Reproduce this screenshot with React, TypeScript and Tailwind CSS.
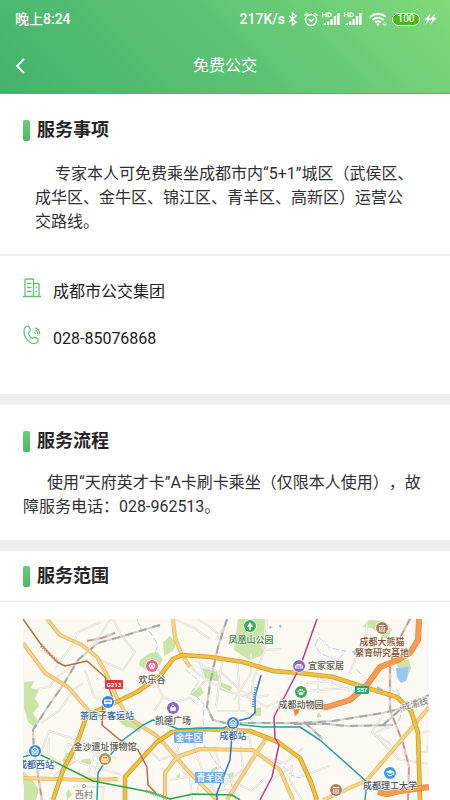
import type { ReactNode } from "react";

const signals = ["sim1", "sim2"];

const parks = [
  "M238 619H265L263 655L249 660L234 650Z",
  "M24 682L34 681L31 688L39 690L35 698L39 706L33 713L38 721L35 728L28 722L24 708Z",
  "M140 660L150 653L158 652L163 660L155 672L146 670L139 665Z",
  "M163 642L170 636L176 643L173 651L164 656Z",
  "M203 668L217 672L221 682L211 680L203 677Z",
  "M221 682L232 687L229 693L220 690Z",
  "M192 690L201 687L204 693L198 697L190 695Z",
  "M362 627L369 620L384 621L392 630L386 639L377 632L372 628Z",
  "M395 662L409 659L411 668L406 681L398 679L399 669Z",
  "M118 715L142 727L139 733L132 728L126 727L120 722Z",
  "M255 709L261 707L261 716L255 716Z",
  "M317 715L319 712L322 717L317 718Z",
  "M66 753L74 752L76 762L68 767L62 761Z",
  "M81 760L90 758L92 764L83 764Z",
  "M211 770L217 766L218 773L212 774Z",
  "M228 774L234 772L233 778L229 777Z",
  "M176 776L180 773L180 778L178 779Z",
  "M23 771L33 781L39 790L36 800H24V785L23 784Z",
  "M69 789L72 795L67 800L66 793Z",
];

const lakes = [
  "M396 668L409 667L406 681L401 683L397 677Z",
  "M377 686L383 689L382 692L377 690Z",
  "M280 624L282 627L280 628L279 626Z",
  "M269 626L273 627L270 629Z",
  "M352 651L357 650L358 656L354 655Z",
];

const streams = [
  "M137 619L141 629L150 632L158 645L154 655L160 660",
  "M185 669L199 681L192 692L204 704L203 722L206 735",
  "M204 745L217 764L229 776L236 800",
  "M267 758L281 764L291 775L300 778",
  "M315 645L319 637L330 648L346 651L337 661L320 653Z",
  "M356 669L362 675L367 680L377 694",
  "M397 689L403 704L400 718L396 725",
];

const streets = [
  "M93 646L112 617L121 635L135 652L123 670L100 660",
  "M56 668L74 642L78 632L101 622",
  "M85 670L94 697L113 705",
  "M37 689L49 687L58 676L75 665",
  "M41 723L60 710L73 690L83 683",
  "M49 738L48 756L61 763M40 755L49 731L78 740L73 761L54 776",
  "M100 738L87 777M79 740L101 750L95 775M66 758L122 775",
  "M67 744L116 758M61 767L97 779M73 787H104L102 800",
  "M182 655L195 671L206 680L230 692L251 698L269 695",
  "M195 660L207 668L222 673L239 689L266 707L288 697",
  "M251 653L251 673L234 700M237 660L239 682L239 712",
  "M267 619L265 650L253 680L251 705M259 642L264 650L282 649",
  "M217 711H246L253 722M218 651L222 662L220 677L216 707",
  "M175 619L194 628L210 639M197 619L210 627L220 636",
  "M216 640L229 619M200 661L205 681L192 693",
  "M151 672L163 697L174 702L190 698L198 704M163 697L154 711",
  "M151 752L160 760L176 754L180 742L204 734",
  "M181 758L184 773L199 778L220 792M194 743L202 770L197 794",
  "M214 746L220 766L210 778L216 796M241 746L243 769L223 786",
  "M170 780L196 775L211 782L229 779L252 791L264 779",
  "M190 777L192 800M204 788L236 791M249 735L252 754",
  "M260 756L285 763L303 748M269 782L292 766L290 781L302 800",
  "M300 674L318 677L336 684L350 691M306 683L332 681L331 674",
  "M349 674L357 656L366 637L367 623M318 678V693M305 691L352 688",
  "M382 717L372 732L398 759L428 764M378 735L390 744L397 758",
  "M416 734L429 731M421 752L427 752V745M376 732L392 726",
  "M299 777L330 766M316 781L314 800",
];

const yellowRoads = [
  "M47 619L60 635L82 645L97 657L107 675L117 698L128 717L143 727L157 736L167 747L190 773L217 800",
  "M23 643L45 673L68 687L90 712L106 718",
  "M173 619L175 638L182 655L190 667",
  "M165 800V773L177 757L200 749L253 750L280 770L293 800",
  "M227 800L250 763L267 737",
  "M323 800L367 780L410 730L429 707",
  "M23 778L53 779L90 780L118 779",
];

const mainRoads = [
  "M53 800L63 770L77 743L87 715L110 705L137 692L160 676L173 659L182 655L210 657L243 662L273 671L300 673L333 677L367 688L397 697L411 711L418 733L420 800",
  "M125 800V777L143 757L157 742L172 732L200 729L250 731L278 742L300 758L310 780L317 800",
];

const expressways = [
  "M419 619L418 640L410 653L398 660L380 667L367 685L350 700L327 707L307 706",
  "M378 792L387 794L400 791L429 787",
];

const railways = [
  "M160 625L120 637L98 643L78 660L63 685L47 708L33 730L34 750",
  "M227 619L218 647L210 683L207 707L213 720L225 723H300L333 721L383 713L399 709L429 695",
  "M294 724H327L347 726L393 725M304 722L323 739M383 725L403 707",
];

const oldRailways = [
  "M410 619L395 647L390 667V710L403 743L409 767L408 800",
  "M34 750L38 775L42 800",
  "M87 641L102 638L115 633",
];

const metroLines = [
  {
    color: "#b66c41",
    path: "M23 619L40 643L57 662L65 666L87 661L105 677L113 699L103 704L102 725L120 740L138 750L147 767L148 785L156 793",
  },
  {
    color: "#279caa",
    path: "M97 800L98 773L107 759L123 740L143 725L153 720L163 723L178 729L223 728L234 724L263 727H300L320 740L367 782L365 800",
  },
  {
    color: "#2fa542",
    path: "M23 757L37 753L93 781L150 792L170 799L193 794L232 795L240 800",
  },
  {
    color: "#3674bd",
    path: "M261 675L255 697V713L249 718L233 722L230 760L217 793V800",
  },
  {
    color: "#c93a79",
    path: "M317 619L300 667L274 717L275 738L279 745L272 777L260 800",
  },
];

const markers = [
  { x: 152, y: 666, color: "#ed608c", kind: "wheel" },
  { x: 108, y: 702, color: "#3583df", kind: "bus" },
  { x: 35, y: 751, color: "#3583df", kind: "train" },
  { x: 105, y: 759, color: "#c5913c", kind: "museum" },
  { x: 173, y: 708, color: "#8c68cc", kind: "bag" },
  { x: 233, y: 723, color: "#3583df", kind: "train" },
  { x: 250, y: 626, color: "#40a85a", kind: "tree" },
  { x: 299, y: 666, color: "#8c68cc", kind: "sofa" },
  { x: 301, y: 692, color: "#40a85a", kind: "paw" },
  { x: 382, y: 628, color: "#ad7e5c", kind: "hall" },
  { x: 390, y: 773, color: "#3f9ce6", kind: "school" },
  { x: 336, y: 790, color: "#ad7e5c", kind: "hall" },
];

const places = [
  { name: "欢乐谷", x: 152, y: 683, color: "#5b5752" },
  { name: "茶店子客运站", x: 107, y: 719, color: "#2c65a4" },
  { name: "金沙遗址博物馆", x: 105, y: 750, color: "#5b5752" },
  { name: "成都西站", x: 36, y: 768, color: "#2c65a4" },
  { name: "西村", x: 84, y: 798, color: "#8c8882" },
  { name: "凯德广场", x: 173, y: 724, color: "#5b5752" },
  { name: "成都站", x: 233, y: 739, color: "#2c65a4" },
  { name: "凤凰山公园", x: 251, y: 643, color: "#35804a" },
  { name: "宜家家居", x: 326, y: 669, color: "#5b5752" },
  { name: "成都动物园", x: 301, y: 708, color: "#5b5752" },
  { name: "成都大熊猫", x: 382, y: 645, color: "#855232" },
  { name: "繁育研究基地", x: 382, y: 656, color: "#855232" },
  { name: "成都理工大学", x: 390, y: 789, color: "#4c5968" },
];

const districts = [
  { name: "金牛区", x: 189, y: 737 },
  { name: "青羊区", x: 210, y: 777 },
];

function MarkerGlyph({ kind }: { kind: string }) {
  switch (kind) {
    case "bus":
      return (
        <>
          <rect x="-4" y="-2.5" width="8" height="4.5" rx="1" fill="white" />
          <path d="M-3-.5H3M-1-2V0M1-2V0" stroke="#3583df" strokeWidth=".7" />
          <path d="M-2.5 3h1M1.5 3h1" stroke="white" />
        </>
      );
    case "train":
      return (
        <>
          <path d="M-3 2V-1.5L0-4 3-1.5V2Z" fill="none" stroke="white" strokeWidth="1.1" />
          <path d="M-1.3 1V-1H1.3V1ZM-3 3.3H3" fill="none" stroke="white" strokeWidth=".9" />
        </>
      );
    case "bag":
      return (
        <>
          <path d="M-3-.8H3L2.5 3H-2.5Z" fill="white" />
          <path d="M-1.5-.5V-2Q0-4 1.5-2V-.5" fill="none" stroke="white" strokeWidth=".9" />
        </>
      );
    case "tree":
      return <path d="M0-4L3.2 1H1V3.8H-1V1H-3.2Z" fill="white" />;
    case "sofa":
      return <path d="M-3.5-.5V2H3.5V-.5M-3 0H3M-2 0V-1.5H2V0" fill="none" stroke="white" strokeWidth="1" />;
    case "paw":
      return (
        <g fill="white">
          <ellipse cy="1.5" rx="2.2" ry="1.7" />
          <circle cx="-2.7" cy="-.5" r=".9" />
          <circle cx="-.9" cy="-2.1" r=".9" />
          <circle cx="1.1" cy="-2.1" r=".9" />
          <circle cx="2.8" cy="-.4" r=".9" />
        </g>
      );
    case "school":
      return (
        <>
          <path d="M-4-1.2L0-3 4-1.2 0 .7Z" fill="white" />
          <path d="M-2.3.5V2Q0 3.6 2.3 2V.5M3.7-1V2" fill="none" stroke="white" strokeWidth=".9" />
        </>
      );
    case "wheel":
      return (
        <>
          <circle r="2.8" fill="none" stroke="white" strokeWidth=".9" />
          <path d="M-3 0H3M0-3V1L-2 3.5M0 1L2 3.5M-2-2L2 2M2-2L-2 2" stroke="white" strokeWidth=".7" fill="none" />
        </>
      );
    case "museum":
      return <path d="M-3 3V-.5Q-3-3 0-3T3-.5V3ZM-1 3V.5H1V3M-3 0H3" fill="none" stroke="white" strokeWidth="1" />;
    default:
      return <path d="M-3.2-2.5H3.2M-2.2-1V2M0-1V2M2.2-1V2M-3.2 3H3.2" stroke="white" strokeWidth="1" />;
  }
}

function Roads({ paths, color, width }: { paths: string[]; color: string; width: number }) {
  return (
    <g fill="none" stroke={color} strokeWidth={width} strokeLinejoin="round">
      {paths.map((d) => (
        <path key={d} d={d} />
      ))}
    </g>
  );
}

function ServiceMap() {
  return (
    <svg viewBox="23 619 406 181" className="block h-auto w-full" role="img" aria-label="服务范围">
      <rect x="23" y="619" width="406" height="181" fill="#fcf9f2" />
      <g fill="#c9e5a8">
        {parks.map((d) => (
          <path key={d} d={d} />
        ))}
      </g>
      <g fill="#9ac6f4">
        {lakes.map((d) => (
          <path key={d} d={d} />
        ))}
      </g>
      <g strokeDasharray="7 2">
        <Roads paths={streams} color="#b4d5f3" width={1} />
      </g>

      <Roads paths={streets} color="#dedbd5" width={2} />
      <Roads paths={streets} color="#f7f5f0" width={1} />

      <Roads paths={railways} color="#d3d1ce" width={2} />
      <g strokeDasharray="8 6">
        <Roads paths={railways} color="#a9a8a8" width={2} />
      </g>
      <Roads paths={oldRailways} color="#e1cbc7" width={2.5} />
      <g strokeDasharray="7 6">
        <Roads paths={oldRailways} color="#c88c8c" width={1.4} />
      </g>

      <Roads paths={yellowRoads} color="#e5b85e" width={4} />
      <Roads paths={yellowRoads} color="#f6d38a" width={2.6} />
      <Roads paths={mainRoads} color="#d19d27" width={4.6} />
      <Roads paths={mainRoads} color="#efc045" width={3} />
      <Roads paths={expressways} color="#e68338" width={6} />
      <Roads paths={expressways} color="#fa9b54" width={4.6} />

      <g fill="none" strokeWidth="1.5" strokeLinejoin="round">
        {metroLines.map((line) => (
          <path key={line.color} d={line.path} stroke={line.color} />
        ))}
      </g>
      {/* line names running along the metro */}
      <g fill="none" strokeWidth="3" strokeDasharray="1.4 1">
        <path d="M41 646L59 663" stroke="#cc906a" />
        <path d="M256 687L253 707" stroke="#6da2dc" />
        <path d="M146 791L167 798" stroke="#6abd74" />
      </g>

      <rect x="105" y="680" width="18" height="9" rx="1" fill="#e5383d" />
      <rect x="355" y="686" width="14" height="8" rx="1" fill="#20a87d" />
      <g fill="white" fontSize="6" fontWeight="700" textAnchor="middle">
        <text x="114" y="687">G213</text>
        <text x="362" y="692">S57</text>
      </g>

      {markers.map((marker) => (
        <g key={`${marker.x}-${marker.y}`} transform={`translate(${marker.x} ${marker.y})`}>
          <circle r="6.7" fill="white" />
          <circle r="6" fill={marker.color} />
          <MarkerGlyph kind={marker.kind} />
        </g>
      ))}
      <path d="M293 709L300 709L298 714L295 716Z" fill="#ef8d46" />
      <circle cx="84" cy="786" r="1.5" fill="white" stroke="#96928d" />

      <g fontSize="9" textAnchor="middle" fontWeight="500" stroke="#fcf9f2" strokeWidth="1.2" paintOrder="stroke">
        {places.map((place) => (
          <text key={place.name} x={place.x} y={place.y} fill={place.color}>
            {place.name}
          </text>
        ))}
        <text x="415" y="707" fill="#77736f" fontWeight="400" transform="rotate(-15 415 704)">
          成渝线
        </text>
      </g>

      {districts.map((district) => (
        <g key={district.name}>
          <rect x={district.x - 15} y={district.y - 5} width="29" height="11" fill="#76aeea" />
          <text x={district.x} y={district.y + 4} fill="white" fontSize="9" fontWeight="500" textAnchor="middle">
            {district.name}
          </text>
        </g>
      ))}
    </svg>
  );
}

function StatusBar() {
  return (
    <div className="flex h-[38px] items-center justify-between pr-[13px] pl-[15px] text-sm font-medium">
      <span>晚上8:24</span>
      <div className="flex items-center">
        <span className="mr-[3px]">217K/s</span>
        <svg width="9" height="14" viewBox="0 0 9 14" className="mr-[7px]" fill="none" stroke="currentColor" strokeWidth="1.4">
          <path d="M1 4L8 10 4.5 13V1L8 4 1 10" />
        </svg>
        <svg width="14" height="15" viewBox="0 0 14 15" className="mr-1" fill="none" stroke="currentColor" strokeWidth="1.4">
          <circle cx="7" cy="8" r="5.5" />
          <path d="M4.5 7L7 9.2 9.8 6.7M.5 3.5L3.5 1M10.5 1L13.5 3.5" />
        </svg>
        {signals.map((signal) => (
          <svg key={signal} width="18" height="14" viewBox="0 0 18 14" className="mr-1" fill="currentColor">
            <path d="M.6 5.2V.4M4 5.2V.4M.6 2.8H4M6 .9H7.2Q9.2 1 9.2 2.8T7.2 4.7H6Z" fill="none" stroke="currentColor" strokeWidth="1.1" />
            <path d="M1 13L4 10.5V13ZM5 9.5H7.4V13H5ZM8.4 7H10.8V13H8.4ZM11.8 4H14.2V13H11.8ZM15.2 1H17.6V13H15.2Z" />
          </svg>
        ))}
        <svg width="19" height="15" viewBox="0 0 19 15" className="ml-[3px] mr-1" fill="none" stroke="currentColor" strokeWidth="1.9">
          <path d="M1 5Q9 -1.5 17 5M3.5 8Q9 3.5 14.5 8M6 10.5Q9 8 12 10.5" />
          <path d="M7 12L9 14 11 12Q9 10.5 7 12Z" fill="currentColor" stroke="none" />
          <path d="M14 12.5H17.5Q17.5 10.5 15.7 10.5T14 12.5Q14 14 17 13.5" strokeWidth=".7" opacity=".7" />
        </svg>
        <span className="mr-1 flex h-[13px] w-7 items-center justify-center rounded-full border border-white bg-[#47b91b] font-['Roboto'] text-[10px] leading-none">
          100
        </span>
        <svg width="13" height="12" viewBox="0 0 13 12" fill="currentColor">
          <path d="M7 0L.4 6.8H3.4L1.2 12 7.4 4.9H4.7ZM11.6 0L5.9 6.8H8.3L5.9 12 13 4.7H9.6Z" />
        </svg>
      </div>
    </div>
  );
}

function SectionTitle({ children }: { children: ReactNode }) {
  return (
    <h2 className="flex items-center gap-[7px] text-lg leading-7 font-bold text-[#252527]">
      <span className="h-[21px] w-[7px] rounded-[2px] bg-linear-to-b from-[#6bcc73] to-[#45b969]" />
      {children}
    </h2>
  );
}

function BuildingIcon() {
  return (
    <svg width="18" height="20" viewBox="0 0 18 20" fill="none" stroke="#67bd7d" strokeWidth="1.3">
      <path d="M0 18.5H18M2 18V1.7Q2 1 2.7 1H9.8Q10.5 1 10.5 1.7V18M10.5 5.5H15.3Q16 5.5 16 6.2V18" />
      <path d="M4 5.5H8.5M4 9.5H8.5M4 13.5H8.5M12.5 9.5H14M12.5 13.5H14" />
    </svg>
  );
}

function PhoneIcon() {
  return (
    <svg width="18" height="20" viewBox="0 0 18 20" fill="none" stroke="#67bd7d" strokeWidth="1.2" strokeLinejoin="round">
      <path d="M2.4 2.2Q4.6-.1 6.2 2.2Q8.2 5 6.5 6.7Q5.1 7.7 5.6 9.1Q6.5 11.6 8.8 13.2Q9.8 13.6 10.7 12.7Q12 11.6 14 13.4Q16.4 15.6 14.3 17.2Q11.5 20.1 7.2 17.4Q2.5 14.3 1.2 8.6Q.3 4.3 2.4 2.2Z" />
      <path d="M11 7.3Q12.4 7.4 12.7 9M11.4 5Q14.5 5.3 14.9 9M11.7 2.8Q16.6 3.4 16.8 9" />
    </svg>
  );
}

export default function App() {
  return (
    <div className="min-h-screen bg-white font-['Roboto','Noto_Sans_CJK_SC',sans-serif] text-base text-[#303032] [text-spacing-trim:space-all]">
      <header className="border-b border-[#55b768] bg-linear-45 from-[#42b36c] via-[#5cc374] to-[#80d97b] text-white">
        <StatusBar />
        <div className="grid h-[55px] grid-cols-[1fr_auto_1fr] items-center px-[15px]">
          <button type="button" aria-label="返回" className="w-6">
            <svg width="12" height="16" viewBox="0 0 12 16" fill="none" stroke="currentColor" strokeWidth="1.8">
              <path d="M9 1L2 8L9 15" />
            </svg>
          </button>
          <h1>免费公交</h1>
        </div>
      </header>

      <main>
        <section>
          <div className="border-b-2 border-[#eeeeee] px-[23px] pt-[22px] pb-5">
            <SectionTitle>服务事项</SectionTitle>
            <p className="mx-3 mt-[18px] indent-5 leading-6">
              专家本人可免费乘坐成都市内“5+1”城区（武侯区、成华区、金牛区、锦江区、青羊区、高新区）运营公交路线。
            </p>
          </div>
          <div className="flex flex-col gap-[21px] px-[23px] pt-[22px] pb-[43px] text-[#202022]">
            <div className="flex items-start gap-3">
              <BuildingIcon />
              <span className="pt-[2px]">成都市公交集团</span>
            </div>
            <div className="flex items-start gap-3">
              <PhoneIcon />
              <a href="tel:02885076868" className="pt-[2px]">
                028-85076868
              </a>
            </div>
          </div>
        </section>

        <section className="border-t-[11px] border-[#efefef] px-[23px] pt-[22px] pb-[21px]">
          <SectionTitle>服务流程</SectionTitle>
          <p className="mt-4 indent-6 leading-6">
            使用“天府英才卡”A卡刷卡乘坐（仅限本人使用），故障服务电话：028-962513。
          </p>
        </section>

        <section className="border-t-[11px] border-[#efefef]">
          <div className="border-b border-[#e8e8e8] px-[23px] py-[11px]">
            <SectionTitle>服务范围</SectionTitle>
          </div>
          <div className="pt-[17px] pr-[21px] pl-[23px]">
            <ServiceMap />
          </div>
        </section>
      </main>
    </div>
  );
}
